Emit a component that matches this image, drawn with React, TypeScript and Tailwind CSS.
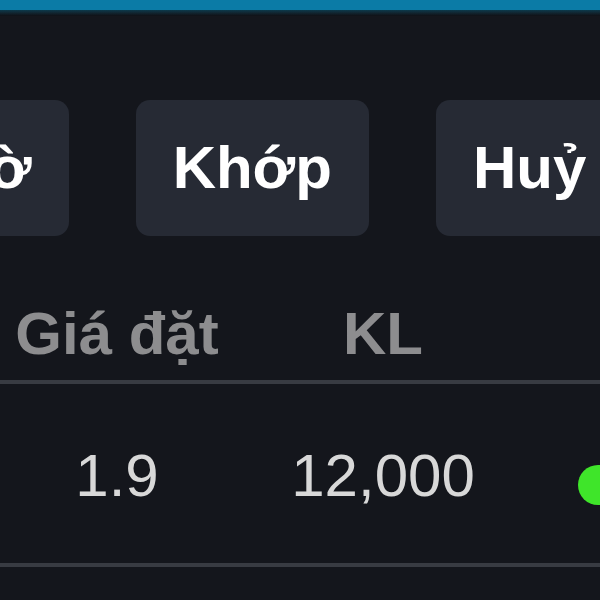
export default function App() {
  const tabs = ["Chờ", "Khớp", "Huỷ"];

  return (
    <div
      className="h-[600px] w-[600px] overflow-hidden bg-[#14161c]"
      style={{ fontFamily: '"Liberation Sans", Arial, sans-serif' }}
    >
      <div className="h-[10px] bg-[#0b7ba6]" />
      <div className="h-[6px] bg-gradient-to-b from-[#0a3a4c] to-[#0f1116]" />

      <div className="mt-[84px] ml-[-128px] flex h-[136px] gap-[67px]">
        {tabs.map((t) => (
          <div
            key={t}
            className="flex h-full shrink-0 items-center rounded-[14px] bg-[#262a34] px-[37px] text-[60px] font-bold leading-none text-white"
          >
            {t}
          </div>
        ))}
      </div>

      <div className="mt-[68px] flex text-[60px] font-bold leading-none text-[#8d8d8f]">
        <div className="w-[234px] shrink-0 text-center">Giá đặt</div>
        <div className="w-[298px] shrink-0 text-center">KL</div>
      </div>
      <div className="mt-[16px] h-[4px] bg-[#383b42]" />

      <div className="mt-[62px] flex items-start text-[60px] leading-none text-[#d8d8d8]">
        <div className="w-[234px] shrink-0 text-center">1.9</div>
        <div className="w-[298px] shrink-0 text-center">12,000</div>
        <div className="ml-[46px] mt-[19px] h-[40px] w-[40px] shrink-0 rounded-full bg-[#3fe52a]" />
      </div>
      <div className="mt-[57px] h-[4px] bg-[#383b42]" />
    </div>
  );
}
